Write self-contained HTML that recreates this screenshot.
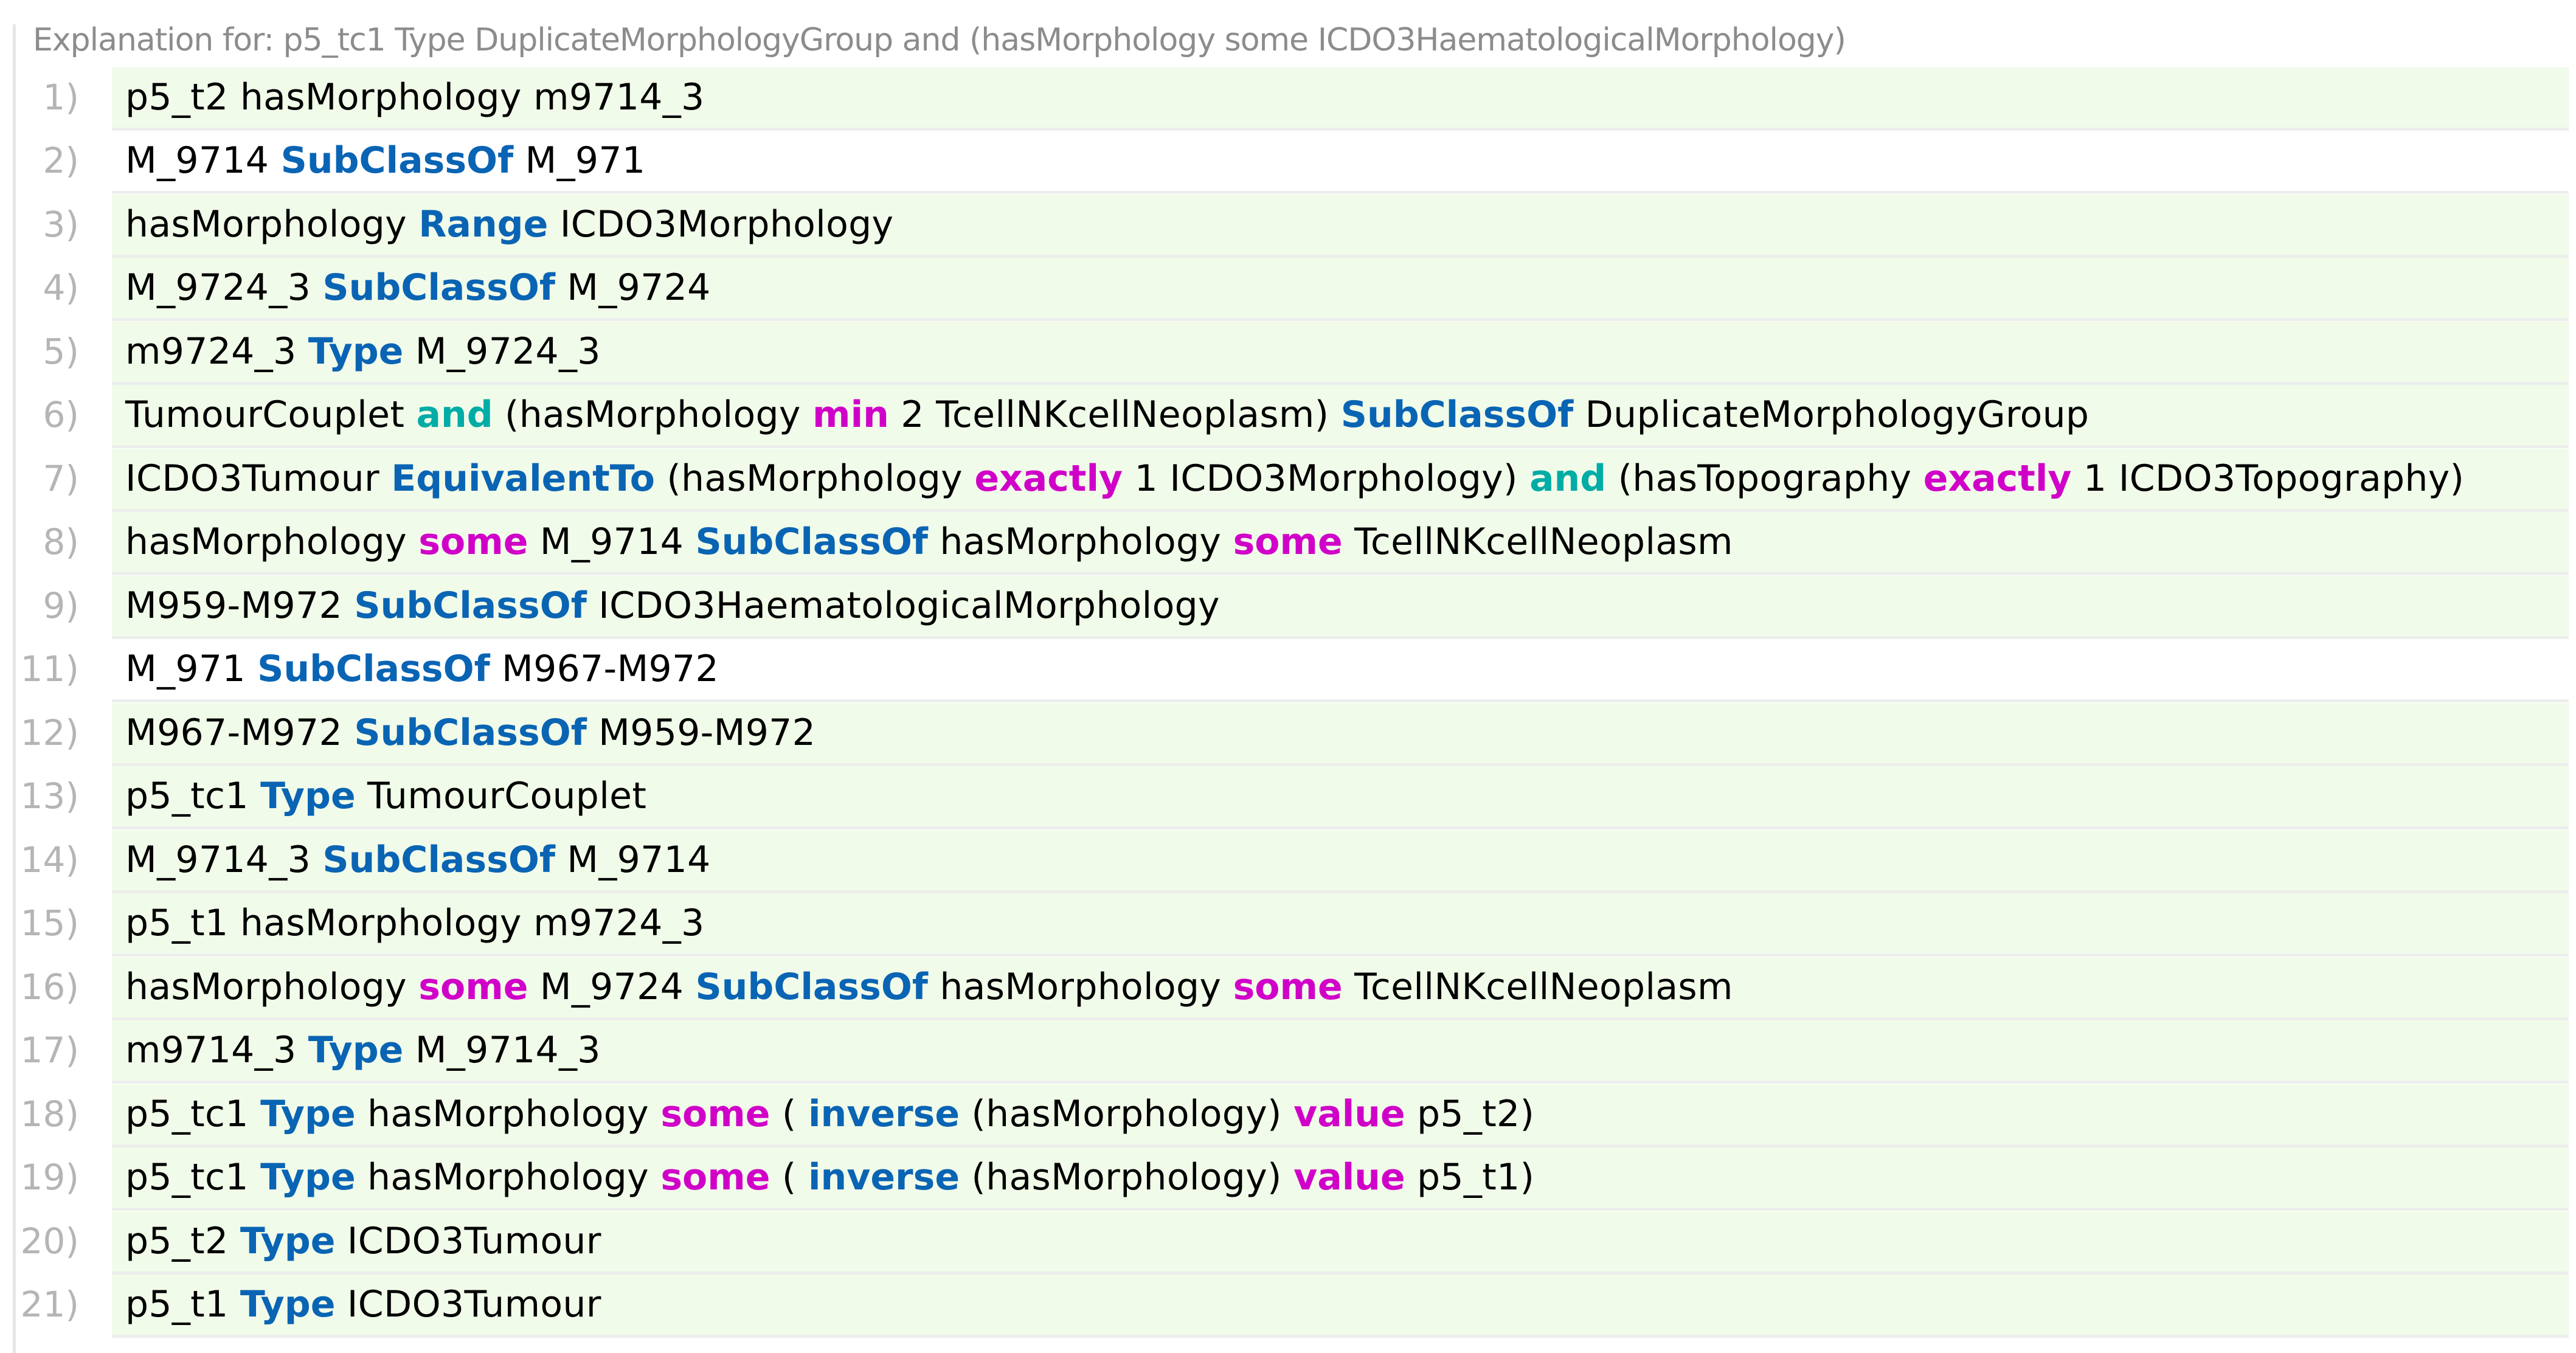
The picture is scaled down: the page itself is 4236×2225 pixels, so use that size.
<!DOCTYPE html>
<html><head><meta charset="utf-8"><style>
html,body{margin:0;padding:0;background:#fff;width:4236px;height:2225px;overflow:hidden;position:relative;font-family:"DejaVu Sans",sans-serif}
.vl{position:absolute;left:21px;top:40px;width:5px;height:2185px;background:#e6e6e6}
.title{position:absolute;left:54px;top:36px;font-size:52px;color:#8c8c8c;white-space:nowrap;line-height:60px;letter-spacing:-1px}
.row{position:absolute;left:184px;width:4040px;height:99px;background:#f1fbe9;border-bottom:5px solid #eceeec}
.row.w{background:#fff}
.n{position:absolute;left:0;width:130px;text-align:right;font-size:58px;color:#b5b5b5;line-height:99px}
.t{position:absolute;left:206px;font-size:60px;color:#000;white-space:nowrap;line-height:99px;letter-spacing:0.3px}
b{font-weight:bold;letter-spacing:0}
.b{color:#0a64b4}.m{color:#d000c8}.g{color:#00aca6}
</style></head><body>
<div class="vl"></div>
<div class="title">Explanation for: p5_tc1 Type DuplicateMorphologyGroup and (hasMorphology some ICDO3HaematologicalMorphology)</div>

<div class="row" style="top:111px"></div><div class="n" style="top:111px">1)</div><div class="t" style="top:111px">p5_t2 hasMorphology m9714_3</div>
<div class="row w" style="top:215px"></div><div class="n" style="top:215px">2)</div><div class="t" style="top:215px">M_9714 <b class="b">SubClassOf</b> M_971</div>
<div class="row" style="top:320px"></div><div class="n" style="top:320px">3)</div><div class="t" style="top:320px">hasMorphology <b class="b">Range</b> ICDO3Morphology</div>
<div class="row" style="top:424px"></div><div class="n" style="top:424px">4)</div><div class="t" style="top:424px">M_9724_3 <b class="b">SubClassOf</b> M_9724</div>
<div class="row" style="top:529px"></div><div class="n" style="top:529px">5)</div><div class="t" style="top:529px">m9724_3 <b class="b">Type</b> M_9724_3</div>
<div class="row" style="top:633px"></div><div class="n" style="top:633px">6)</div><div class="t" style="top:633px">TumourCouplet <b class="g">and</b> (hasMorphology <b class="m">min</b> 2 TcellNKcellNeoplasm) <b class="b">SubClassOf</b> DuplicateMorphologyGroup</div>
<div class="row" style="top:738px"></div><div class="n" style="top:738px">7)</div><div class="t" style="top:738px">ICDO3Tumour <b class="b">EquivalentTo</b> (hasMorphology <b class="m">exactly</b> 1 ICDO3Morphology) <b class="g">and</b> (hasTopography <b class="m">exactly</b> 1 ICDO3Topography)</div>
<div class="row" style="top:842px"></div><div class="n" style="top:842px">8)</div><div class="t" style="top:842px">hasMorphology <b class="m">some</b> M_9714 <b class="b">SubClassOf</b> hasMorphology <b class="m">some</b> TcellNKcellNeoplasm</div>
<div class="row" style="top:947px"></div><div class="n" style="top:947px">9)</div><div class="t" style="top:947px">M959-M972 <b class="b">SubClassOf</b> ICDO3HaematologicalMorphology</div>
<div class="row w" style="top:1051px"></div><div class="n" style="top:1051px">11)</div><div class="t" style="top:1051px">M_971 <b class="b">SubClassOf</b> M967-M972</div>
<div class="row" style="top:1156px"></div><div class="n" style="top:1156px">12)</div><div class="t" style="top:1156px">M967-M972 <b class="b">SubClassOf</b> M959-M972</div>
<div class="row" style="top:1260px"></div><div class="n" style="top:1260px">13)</div><div class="t" style="top:1260px">p5_tc1 <b class="b">Type</b> TumourCouplet</div>
<div class="row" style="top:1365px"></div><div class="n" style="top:1365px">14)</div><div class="t" style="top:1365px">M_9714_3 <b class="b">SubClassOf</b> M_9714</div>
<div class="row" style="top:1469px"></div><div class="n" style="top:1469px">15)</div><div class="t" style="top:1469px">p5_t1 hasMorphology m9724_3</div>
<div class="row" style="top:1574px"></div><div class="n" style="top:1574px">16)</div><div class="t" style="top:1574px">hasMorphology <b class="m">some</b> M_9724 <b class="b">SubClassOf</b> hasMorphology <b class="m">some</b> TcellNKcellNeoplasm</div>
<div class="row" style="top:1678px"></div><div class="n" style="top:1678px">17)</div><div class="t" style="top:1678px">m9714_3 <b class="b">Type</b> M_9714_3</div>
<div class="row" style="top:1783px"></div><div class="n" style="top:1783px">18)</div><div class="t" style="top:1783px">p5_tc1 <b class="b">Type</b> hasMorphology <b class="m">some</b> ( <b class="b">inverse</b> (hasMorphology) <b class="m">value</b> p5_t2)</div>
<div class="row" style="top:1887px"></div><div class="n" style="top:1887px">19)</div><div class="t" style="top:1887px">p5_tc1 <b class="b">Type</b> hasMorphology <b class="m">some</b> ( <b class="b">inverse</b> (hasMorphology) <b class="m">value</b> p5_t1)</div>
<div class="row" style="top:1992px"></div><div class="n" style="top:1992px">20)</div><div class="t" style="top:1992px">p5_t2 <b class="b">Type</b> ICDO3Tumour</div>
<div class="row" style="top:2096px"></div><div class="n" style="top:2096px">21)</div><div class="t" style="top:2096px">p5_t1 <b class="b">Type</b> ICDO3Tumour</div>
</body></html>
